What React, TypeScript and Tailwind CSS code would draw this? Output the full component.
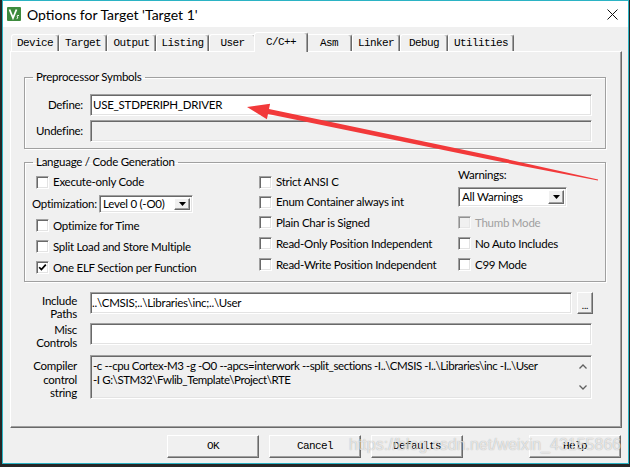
import React from 'react'

const SUNKEN =
  'border border-t-[#a0a0a0] border-l-[#a0a0a0] border-r-white border-b-white shadow-[inset_1px_1px_0_#696969,inset_-1px_-1px_0_#e3e3e3]'
const RAISED =
  'border border-t-white border-l-white border-r-[#696969] border-b-[#696969] shadow-[inset_-1px_-1px_0_#a0a0a0]'
const GROUP = 'border border-[#a0a0a0] shadow-[1px_1px_0_#fff,inset_1px_1px_0_#fff]'
const MONO = "font-['Liberation_Mono',monospace] text-[11px] tracking-[-0.6px]"

const TABS: [string, string, boolean?][] = [
  ['Device', 'w-[48px]'],
  ['Target', 'w-[48px]'],
  ['Output', 'w-[49px]'],
  ['Listing', 'w-[53px]'],
  ['User', 'w-[47px]'],
  ['C/C++', 'w-[54px]', true],
  ['Asm', 'w-[46px]'],
  ['Linker', 'w-[48px]'],
  ['Debug', 'w-[48px]'],
  ['Utilities', 'w-[66px]'],
]

function Check({ checked, disabled }: { checked?: boolean; disabled?: boolean }) {
  return (
    <span
      className={`flex h-[13px] w-[13px] shrink-0 items-center justify-center ${
        disabled ? 'bg-[#f0f0f0] opacity-70' : 'bg-white'
      } ${SUNKEN}`}
    >
      {checked && (
        <svg width="9" height="9" viewBox="0 0 9 9">
          <path d="M1.2 4.2 L3.4 6.6 L7.8 1.6" fill="none" stroke="#000" strokeWidth="1.7" />
        </svg>
      )}
    </span>
  )
}

function CheckRow({
  label,
  h,
  pad = '',
  checked,
  disabled,
}: {
  label: string
  h: string
  pad?: string
  checked?: boolean
  disabled?: boolean
}) {
  return (
    <div className={`flex items-center gap-[4px] ${h} ${pad}`}>
      <Check checked={checked} disabled={disabled} />
      <span className={disabled ? 'text-[#a0a0a0]' : ''}>{label}</span>
    </div>
  )
}

function Select({ value, cls }: { value: string; cls: string }) {
  return (
    <div className={`flex items-center bg-white ${SUNKEN} ${cls}`}>
      <span className="flex-1 pl-[3px]">{value}</span>
      <span className={`mr-[2px] flex h-[calc(100%-4px)] w-[16px] items-center justify-center bg-[#f0f0f0] ${RAISED}`}>
        <svg width="7" height="4" viewBox="0 0 7 4">
          <path d="M0 0 H7 L3.5 4 Z" fill="#000" />
        </svg>
      </span>
    </div>
  )
}

function Btn({ label, cls }: { label: string; cls: string }) {
  return (
    <div className={`flex h-[23px] w-[92px] items-center justify-center bg-[#f0f0f0] ${MONO} ${RAISED} ${cls}`}>
      {label}
    </div>
  )
}

export default function App() {
  return (
    <div className="relative h-[467px] w-[630px] overflow-hidden bg-[#262626] font-['Lato','Liberation_Sans',sans-serif] text-[11.5px] tracking-[-0.25px] text-black">
      <div className="ml-[2px] flex h-[464px] w-[627px] flex-col border border-[#2bb3c4]">
        {/* title bar */}
        <div className="flex h-[26px] shrink-0 items-center bg-white">
          <svg className="ml-[4px]" width="14" height="14" viewBox="0 0 14 14">
            <rect width="14" height="14" rx="1" fill="#3d8b3d" />
            <path d="M2.5 2.5 L6 11 L9.5 2.5" fill="none" stroke="#fff" strokeWidth="1.8" />
            <path d="M12 8.5 Q9.5 8 10.3 9.8 Q11.8 11.2 9.6 11.6" fill="none" stroke="#fff" strokeWidth="1" />
          </svg>
          <span className="ml-[6px] text-[14px] tracking-normal">Options for Target 'Target 1'</span>
          <svg className="ml-auto mr-[10px]" width="11" height="11" viewBox="0 0 11 11">
            <path d="M0.5 0.5 L10.5 10.5 M10.5 0.5 L0.5 10.5" stroke="#111" strokeWidth="1" />
          </svg>
        </div>

        <div className="flex flex-1 flex-col bg-[#f0f0f0]">
          {/* tabs */}
          <div className="ml-[8px] mt-[5px] flex h-[19px] items-end">
            {TABS.map(([label, w, active]) => (
              <div
                key={label}
                className={`flex items-center justify-center rounded-t-[3px] border-l border-r border-t border-l-white border-r-[#696969] border-t-white bg-[#f0f0f0] shadow-[inset_-1px_0_0_#a0a0a0] ${MONO} ${w} ${
                  active ? 'relative z-10 -mx-[2px] -mb-px h-[20px]' : 'h-[17px] pt-px'
                }`}
              >
                {label}
              </div>
            ))}
          </div>

          {/* panel */}
          <div className="ml-[7px] flex h-[377px] w-[612px] flex-col border border-b-[#696969] border-l-white border-r-[#696969] border-t-white shadow-[inset_-1px_-1px_0_#a0a0a0]">
            <fieldset className={`mx-[13px] mt-[18px] w-[582px] pb-[6px] ${GROUP}`}>
              <legend className="ml-[8px] px-[3px] leading-[14px]">Preprocessor Symbols</legend>
              <div className="mt-[10px] flex items-center">
                <span className="w-[58px] text-right">Define:</span>
                <div className={`ml-[7px] flex h-[22px] w-[502px] items-center bg-white pl-[2px] ${SUNKEN}`}>
                  USE_STDPERIPH_DRIVER
                </div>
              </div>
              <div className="mt-[4px] flex items-center">
                <span className="w-[58px] text-right">Undefine:</span>
                <div className={`ml-[7px] h-[22px] w-[502px] bg-[#f0f0f0] ${SUNKEN}`} />
              </div>
            </fieldset>

            <fieldset className={`mx-[13px] mt-[6px] w-[582px] pb-[3px] ${GROUP}`}>
              <legend className="ml-[8px] px-[3px] leading-[14px]">Language / Code Generation</legend>
              <div className="flex">
                <div className="flex w-[234px] flex-col pt-[3px]">
                  <CheckRow label="Execute-only Code" h="h-[20px]" pad="pl-[11px]" />
                  <div className="flex h-[23px] items-center pl-[7px]">
                    <span className="w-[67px]">Optimization:</span>
                    <Select value="Level 0 (-O0)" cls="h-[18px] w-[94px]" />
                  </div>
                  <CheckRow label="Optimize for Time" h="h-[21px]" pad="pl-[11px]" />
                  <CheckRow label="Split Load and Store Multiple" h="h-[21px]" pad="pl-[11px]" />
                  <CheckRow label="One ELF Section per Function" h="h-[21px]" pad="pl-[11px]" checked />
                </div>
                <div className="flex w-[199px] flex-col pt-[3px]">
                  <CheckRow label="Strict ANSI C" h="h-[20px]" />
                  <CheckRow label="Enum Container always int" h="h-[20px]" />
                  <CheckRow label="Plain Char is Signed" h="h-[21px]" />
                  <CheckRow label="Read-Only Position Independent" h="h-[21px]" />
                  <CheckRow label="Read-Write Position Independent" h="h-[21px]" />
                </div>
                <div className="flex flex-col">
                  <span className="-mt-px leading-[14px]">Warnings:</span>
                  <Select value="All Warnings" cls="mt-[5px] h-[20px] w-[109px]" />
                  <div className="mt-[5px] flex flex-col">
                    <CheckRow label="Thumb Mode" h="h-[21px]" disabled />
                    <CheckRow label="No Auto Includes" h="h-[21px]" />
                    <CheckRow label="C99 Mode" h="h-[21px]" />
                  </div>
                </div>
              </div>
            </fieldset>

            <div className="mt-[10px] flex h-[22px] items-start">
              <div className="mt-[2px] w-[66px] text-right leading-[13px]">
                Include
                <br />
                Paths
              </div>
              <div className={`ml-[13px] flex h-[22px] w-[482px] items-center bg-white pl-px ${SUNKEN}`}>
                ..\CMSIS;..\Libraries\inc;..\User
              </div>
              <div className={`ml-[5px] flex h-[22px] w-[16px] items-end justify-center pb-[3px] text-[10px] leading-[10px] ${RAISED}`}>
                ...
              </div>
            </div>

            <div className="mt-[9px] flex h-[22px] items-start">
              <div className="w-[66px] text-right leading-[13px]">
                Misc
                <br />
                Controls
              </div>
              <div className={`ml-[13px] h-[22px] w-[502px] bg-white ${SUNKEN}`} />
            </div>

            <div className="mt-[10px] flex h-[44px] items-start">
              <div className="mt-[4px] w-[66px] text-right leading-[13.5px]">
                Compiler
                <br />
                control
                <br />
                string
              </div>
              <div className={`ml-[13px] flex h-[44px] w-[502px] bg-[#f0f0f0] ${SUNKEN}`}>
                <div className="flex-1 overflow-hidden whitespace-nowrap pl-[2px] pt-[3px] leading-[14px] tracking-[-0.42px]">
                  <div>-c --cpu Cortex-M3 -g -O0 --apcs=interwork --split_sections -I..\CMSIS -I..\Libraries\inc -I..\User</div>
                  <div>-I G:\STM32\Fwlib_Template\Project\RTE</div>
                </div>
                <div className="flex w-[17px] flex-col items-center justify-between py-[8px]">
                  <svg width="8" height="5" viewBox="0 0 8 5">
                    <path d="M0.5 4.5 L4 1 L7.5 4.5" fill="none" stroke="#606060" strokeWidth="1.3" />
                  </svg>
                  <svg width="8" height="5" viewBox="0 0 8 5">
                    <path d="M0.5 0.5 L4 4 L7.5 0.5" fill="none" stroke="#606060" strokeWidth="1.3" />
                  </svg>
                </div>
              </div>
            </div>
          </div>

          {/* dialog buttons */}
          <div className="mt-[7px] flex">
            <Btn label="OK" cls="ml-[164px]" />
            <Btn label="Cancel" cls="ml-[10px]" />
            <Btn label="Defaults" cls="ml-[10px]" />
            <Btn label="Help" cls="ml-[66px]" />
          </div>
        </div>
      </div>

      {/* blog watermark */}
      <div className="pointer-events-none absolute left-[349px] top-[435px] font-['Liberation_Sans',sans-serif] text-[16px] leading-[20px] tracking-normal text-white/70 [text-shadow:0_0_1px_rgba(0,0,0,0.35)]">
        https://blog.csdn.net/weixin_43155866
      </div>

      {/* red annotation arrow */}
      <svg className="pointer-events-none absolute left-0 top-0" width="630" height="467" viewBox="0 0 630 467">
        <polygon
          points="247,107 270.1,103.7 269,109.1 494.1,156.3 598.1,179.5 597.9,180.5 493.3,160.3 268,113.9 266.9,119.3"
          fill="#f2393a"
        />
      </svg>
    </div>
  )
}
